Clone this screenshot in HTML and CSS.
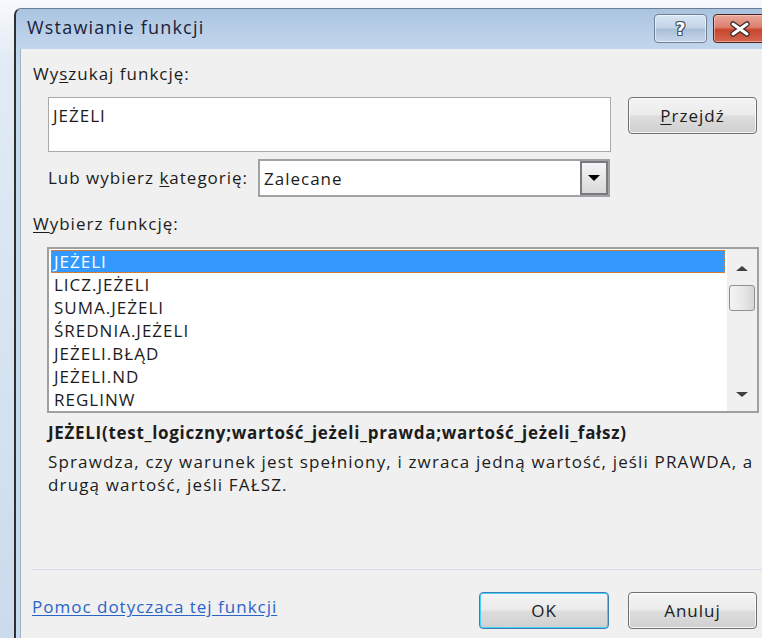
FILE: index.html
```html
<!DOCTYPE html>
<html lang="pl">
<head>
<meta charset="utf-8">
<title>Wstawianie funkcji</title>
<link rel="stylesheet" href="styles.css">
</head>
<body>
<div class="window">
  <div class="titlebar">
    <span class="title">Wstawianie funkcji</span>
    <div class="caption-btns">
      <div class="cbtn help"><span class="qmark">?</span></div>
      <div class="cbtn close">
        <svg width="22" height="16" viewBox="0 0 22 16">
          <path d="M4 3 L18 13 M18 3 L4 13" stroke="#3b2a28" stroke-width="5.5" stroke-linecap="round"/>
          <path d="M4 3 L18 13 M18 3 L4 13" stroke="#ffffff" stroke-width="3" stroke-linecap="round"/>
        </svg>
      </div>
    </div>
  </div>
  <div class="client">
    <div class="lbl lbl-top">Wy<u>s</u>zukaj funkcję:</div>
    <div class="search-row">
      <div class="search-box">JEŻELI</div>
      <div class="btn btn-go"><span><u>P</u>rzejdź</span></div>
    </div>
    <div class="cat-row">
      <span class="lbl">Lub wybierz <u>k</u>ategorię:</span>
      <div class="combo">
        <span class="combo-text">Zalecane</span>
        <div class="combo-btn"><span class="tri-down"></span></div>
      </div>
    </div>
    <div class="lbl lbl-list"><u>W</u>ybierz funkcję:</div>
    <div class="listbox">
      <ul class="items">
        <li class="sel">JEŻELI</li>
        <li>LICZ.JEŻELI</li>
        <li>SUMA.JEŻELI</li>
        <li>ŚREDNIA.JEŻELI</li>
        <li>JEŻELI.BŁĄD</li>
        <li>JEŻELI.ND</li>
        <li>REGLINW</li>
      </ul>
      <div class="vscroll">
        <span class="arrow-up"></span>
        <div class="thumb"></div>
        <span class="arrow-down"></span>
      </div>
    </div>
    <div class="signature">JEŻELI(test_logiczny;wartość_jeżeli_prawda;wartość_jeżeli_fałsz)</div>
    <div class="desc">Sprawdza, czy warunek jest spełniony, i zwraca jedną wartość, jeśli PRAWDA, a drugą wartość, jeśli FAŁSZ.</div>
    <div class="footer">
      <a class="help-link" href="#">Pomoc dotyczaca tej funkcji</a>
      <div class="btn btn-ok"><span>OK</span></div>
      <div class="btn btn-cancel"><span>Anuluj</span></div>
    </div>
  </div>
</div>
</body>
</html>
```

FILE: styles.css
```css
html, body {
  margin: 0;
  padding: 0;
}

body {
  width: 762px;
  height: 638px;
  overflow: hidden;
  background: linear-gradient(#f7f9fc 0, #e2ebf5 60px, #cbdbed 638px);
  font-family: "Open Sans", "Noto Sans", "DejaVu Sans", sans-serif;
  font-size: 17px;
  letter-spacing: 1px;
  color: #1c1c1c;
}

/* dialog frame */
.window {
  margin: 8px 0 0 14px;
  width: 760px;
  height: 640px;
  border-left: 2px solid #2f2f2f;
  border-top: 1px solid #6b7d92;
  border-top-left-radius: 7px;
  padding-left: 4px;
  background: linear-gradient(#a9c4e0 0, #bed3ea 30px, #c6d9ed 60px, #c8daee 100%);
  display: flex;
  flex-direction: column;
}

.titlebar {
  height: 40px;
  display: flex;
  align-items: flex-start;
  padding-right: 13px;
}

.title {
  margin: 6px 0 0 7px;
  font-size: 18px;
  letter-spacing: 1.2px;
  color: #1d1d3a;
}

.caption-btns {
  margin-left: auto;
  margin-top: 5px;
  display: flex;
  gap: 6px;
}

.cbtn {
  height: 29px;
  box-sizing: border-box;
  border-radius: 4px;
  display: flex;
  align-items: center;
  justify-content: center;
}

.help {
  width: 53px;
  border: 1px solid #6f7f96;
  background: linear-gradient(#d9e5f2 0, #c3d4e7 48%, #a9bed6 52%, #c6d7ea 100%);
  box-shadow: inset 0 0 0 1px rgba(255, 255, 255, 0.55);
}

.qmark {
  font-family: "DejaVu Sans", sans-serif;
  font-weight: bold;
  font-size: 17px;
  letter-spacing: 0;
  color: #ffffff;
  text-shadow: -1px 0 #4b5462, 1px 0 #4b5462, 0 -1px #4b5462, 0 1px #4b5462,
               1px 1px #4b5462, -1px -1px #4b5462, 1px -1px #4b5462, -1px 1px #4b5462;
}

.close {
  width: 54px;
  border: 1px solid #4f2420;
  background: linear-gradient(#e9a99b 0, #dc7f6d 45%, #c8442d 55%, #d4674f 100%);
  box-shadow: inset 0 0 0 1px rgba(255, 220, 210, 0.5);
}

/* client area */
.client {
  flex: 1;
  background: #f0f0f0;
  border-left: 1px solid #9fb1c5;
  display: flex;
  flex-direction: column;
  padding-left: 12px;
}

.lbl {
  line-height: 22px;
}

u {
  text-decoration: underline;
  text-underline-offset: 2px;
}

.lbl-top {
  margin-top: 14px;
}

.search-row {
  margin-top: 12px;
  margin-left: 15px;
  display: flex;
  align-items: flex-start;
}

.search-box {
  width: 563px;
  height: 55px;
  box-sizing: border-box;
  background: #ffffff;
  border: 1px solid #a9a9a9;
  padding: 7px 0 0 4px;
  line-height: 22px;
}

.btn {
  height: 37px;
  box-sizing: border-box;
  border: 1px solid #707070;
  border-radius: 4px;
  background: linear-gradient(#f4f4f4 0, #ebebeb 48%, #dddddd 52%, #d0d0d0 100%);
  box-shadow: inset 0 0 0 1px rgba(255, 255, 255, 0.75);
  display: flex;
  align-items: center;
  justify-content: center;
}

.btn-go {
  width: 129px;
  margin-left: 17px;
}

.cat-row {
  margin-top: 7px;
  margin-left: 15px;
  display: grid;
  grid-template-columns: 210px 352px;
  align-items: center;
}

.combo {
  height: 38px;
  box-sizing: border-box;
  border: 2px solid #a2a2a6;
  background: #ffffff;
  display: flex;
  align-items: center;
}

.combo-text {
  padding-left: 4px;
  flex: 1;
}

.combo-btn {
  width: 28px;
  height: 34px;
  box-sizing: border-box;
  border: 2px solid #7a7a7e;
  background: linear-gradient(#f6f6f6, #d8d8d8);
  display: flex;
  align-items: center;
  justify-content: center;
}

.tri-down {
  width: 0;
  height: 0;
  border-left: 6px solid transparent;
  border-right: 6px solid transparent;
  border-top: 6px solid #000000;
}

.lbl-list {
  margin-top: 16px;
}

/* function list */
.listbox {
  margin-top: 12px;
  margin-left: 14px;
  width: 712px;
  height: 166px;
  box-sizing: border-box;
  border: 2px solid #a0a0a0;
  background: #ffffff;
  display: flex;
}

.items {
  list-style: none;
  margin: 0;
  padding: 1px 0 0 2px;
  flex: 1;
}

.items li {
  height: 23px;
  line-height: 23px;
  padding-left: 3px;
  box-sizing: border-box;
}

.items li.sel {
  background: #3399ff;
  color: #ffffff;
  outline: 1px dotted #d9843c;
  outline-offset: -1px;
  margin-right: 2px;
}

.vscroll {
  width: 30px;
  background: #f0f0f0;
  display: flex;
  flex-direction: column;
  align-items: center;
}

.arrow-up {
  margin-top: 17px;
  width: 0;
  height: 0;
  border-left: 6px solid transparent;
  border-right: 6px solid transparent;
  border-bottom: 5px solid #404040;
}

.thumb {
  margin-top: 14px;
  width: 26px;
  height: 26px;
  box-sizing: border-box;
  border: 1px solid #8e8f8f;
  border-radius: 3px;
  background: linear-gradient(90deg, #f3f3f3 0, #e9e9e9 50%, #d6d6d6 100%);
}

.arrow-down {
  margin-top: auto;
  margin-bottom: 14px;
  width: 0;
  height: 0;
  border-left: 6px solid transparent;
  border-right: 6px solid transparent;
  border-top: 5px solid #404040;
}

.signature {
  margin-top: 8px;
  margin-left: 15px;
  font-weight: bold;
  letter-spacing: 0.7px;
  line-height: 23px;
}

.desc {
  margin-top: 6px;
  margin-left: 15px;
  width: 716px;
  letter-spacing: 1.15px;
  line-height: 23px;
}

.footer {
  margin-top: auto;
  margin-bottom: 20px;
  border-top: 1px solid #d5dceb;
  margin-left: -1px;
  padding-top: 22px;
  display: flex;
  align-items: flex-start;
}

.help-link {
  color: #2a64c8;
  text-decoration: underline;
  text-underline-offset: 2px;
  line-height: 23px;
  margin-top: 3px;
}

.btn-ok {
  margin-left: auto;
  width: 130px;
  border-color: #3c7fb1;
  box-shadow: inset 0 0 0 1px #48d0f8;
}

.btn-cancel {
  margin-left: 19px;
  width: 129px;
  margin-right: 23px;
}
```
